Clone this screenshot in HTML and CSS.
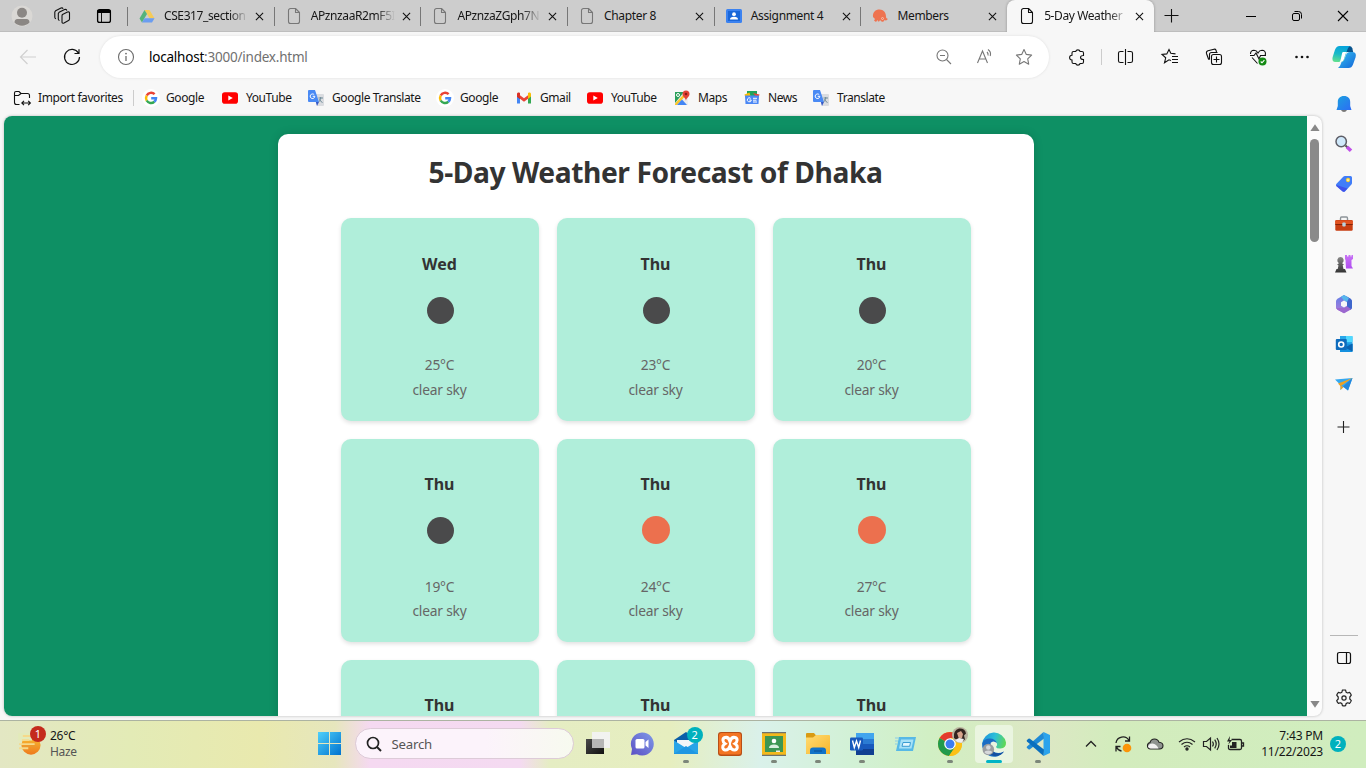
FILE: index.html
```html
<!DOCTYPE html>
<html lang="en">
<head>
<meta charset="utf-8">
<title>5-Day Weather Forecast</title>
<link rel="stylesheet" href="styles.css">
</head>
<body>
<svg class="defs" width="0" height="0">
  <defs>
    <linearGradient id="blue" x1="0" y1="0" x2="1" y2="1"><stop offset="0" stop-color="#35c1f1"/><stop offset="1" stop-color="#1466d8"/></linearGradient>
    <linearGradient id="bell" x1="0" y1="0" x2="1" y2="1"><stop offset="0" stop-color="#1ba2df"/><stop offset="1" stop-color="#2d6cf5"/></linearGradient>
    <linearGradient id="copA" x1="0.5" y1="0" x2="0.3" y2="1"><stop offset="0" stop-color="#06a3dc"/><stop offset="0.5" stop-color="#19b9c8"/><stop offset="1" stop-color="#62e08e"/></linearGradient>
    <linearGradient id="win" gradientUnits="userSpaceOnUse" x1="0" y1="0" x2="23" y2="23"><stop offset="0" stop-color="#4fd0fa"/><stop offset="1" stop-color="#0072cf"/></linearGradient>
    <linearGradient id="m365" x1="0" y1="0" x2="0" y2="1"><stop offset="0" stop-color="#5e7fe6"/><stop offset="1" stop-color="#b27bd9"/></linearGradient>
    <linearGradient id="rook" x1="0" y1="0" x2="0" y2="1"><stop offset="0" stop-color="#c873f5"/><stop offset="1" stop-color="#b04df0"/></linearGradient>
    <linearGradient id="pawn" x1="0" y1="0" x2="0" y2="1"><stop offset="0" stop-color="#888"/><stop offset="1" stop-color="#333"/></linearGradient>
    <linearGradient id="chat" x1="1" y1="0" x2="0" y2="1"><stop offset="0" stop-color="#7f9ae8"/><stop offset="1" stop-color="#5b4fc4"/></linearGradient>
    <linearGradient id="edge" x1="0" y1="0.3" x2="1" y2="0.5"><stop offset="0" stop-color="#1f93dc"/><stop offset="0.5" stop-color="#2bbfd8"/><stop offset="1" stop-color="#5fd856"/></linearGradient>
    <linearGradient id="folder" x1="0" y1="0" x2="1" y2="1"><stop offset="0" stop-color="#ffdc73"/><stop offset="1" stop-color="#f8b62b"/></linearGradient>
    <linearGradient id="darkSq" x1="0" y1="0" x2="1" y2="1"><stop offset="0" stop-color="#4a4a4a"/><stop offset="1" stop-color="#111"/></linearGradient>
    <linearGradient id="sun" x1="0" y1="0" x2="0" y2="1"><stop offset="0" stop-color="#f8c033"/><stop offset="1" stop-color="#ee7a1d"/></linearGradient>
  </defs>
  <symbol id="i-close" viewBox="0 0 10 10"><path d="M1 1l8 8M9 1l-8 8" fill="none" stroke="#111" stroke-width="1.2"/></symbol>
  <symbol id="i-file" viewBox="0 0 16 18"><path d="M4.500 1.500h5l4 4v9a2 2 0 0 1-2 2h-7a2 2 0 0 1-2-2v-11a2 2 0 0 1 2-2zM9.500 1.500v4h4" fill="none" stroke="currentColor" stroke-width="1.1" stroke-linejoin="round"/></symbol>
  <symbol id="i-g" viewBox="0 0 18 18"><circle cx="9" cy="9" r="9" fill="#fff"/><g fill="none" stroke-width="2.500"><path d="M12.600 5.200A5 5 0 0 0 4.700 6.500" stroke="#ea4335"/><path d="M4.700 6.500a5 5 0 0 0 0 5" stroke="#fbbc05"/><path d="M4.700 11.500a5 5 0 0 0 7.600 1.300" stroke="#34a853"/><path d="M12.300 12.800A5 5 0 0 0 14 9.200H9.200" stroke="#4285f4"/></g></symbol>
  <symbol id="i-yt" viewBox="0 0 16 16"><rect y="2.300" width="16" height="11.400" rx="2.800" fill="#f00"/><path d="M6.300 5.400v5.200L10.800 8z" fill="#fff"/></symbol>
  <symbol id="i-gt" viewBox="0 0 16 16"><path d="M6 4h9a1 1 0 0 1 1 1v10a1 1 0 0 1-1 1H9z" fill="#dadce0"/><path d="M7.800 12H11l-2 4z" fill="#3559c7"/><path d="M1 0h6l4 12H1a1 1 0 0 1-1-1V1a1 1 0 0 1 1-1z" fill="#4a8af4"/><path d="M6.200 4.700A2.300 2.300 0 1 0 6.800 6.300H4.700" fill="none" stroke="#fff"/><path d="M10.500 8h4.500M12.700 7v1c-.2 2-1 3.300-2 4M11.300 9.300c.7 1.500 1.700 2.500 3.200 3.200" fill="none" stroke="#6e8b98"/></symbol>
  <symbol id="i-gmail" viewBox="0 0 16 16"><path d="M1 4v9.500h3V7z" fill="#4285f4"/><path d="M12 7v6.500h3V4z" fill="#34a853"/><path d="M1 3.500l3 2.300V9L1 6.700z" fill="#c5221f"/><path d="M4 5.200L8 8.200l4-3v3.600l-4 3-4-3z" fill="#ea4335"/><path d="M1 6.700V4c0-1.700 1.700-2 2.600-1.200L4 3.100v5.700z" fill="#d93025"/><path d="M12 3.100l.5-.4C13.700 2 15 2.700 15 4v2.600l-3 2.300z" fill="#fbbc04"/></symbol>
  <symbol id="i-maps" viewBox="0 0 16 16"><path d="M1 3l13-1v13H1z" fill="#e8eaed"/><path d="M1 2h9L1 13z" fill="#2a9f5a"/><path d="M1 15V13.500L11 3l1.500 2L3 15z" fill="#fbc62b"/><path d="M3 15l5-5.500 5 5.500z" fill="#4285f4"/><path d="M9 9l3-3 2 3v5z" fill="#eceef0"/><circle cx="4" cy="5" r="1.500" fill="none" stroke="#fff"/><path d="M12 11c0-3-3.500-4-3.500-7a3.500 3.500 0 0 1 7 0c0 3-3.500 4-3.500 7z" fill="#e24335"/><circle cx="12" cy="4" r="1.300" fill="#8b1c14"/></symbol>
  <symbol id="i-news" viewBox="0 0 16 16"><path d="M3 1h10v5H3z" fill="#1fa35c"/><path d="M.5 4.500l5-2L7 8H1.500z" fill="#fbbc04"/><path d="M9 3l6.500 1.500L14 9z" fill="#ea4335"/><path d="M1 5.500h14L14.500 14H1.500z" fill="#4a87f5"/><path d="M6.700 8.400a2 2 0 1 0 .6 1.600H5.300M9 8.300h4M9 10.200h3.500M9 12h4" fill="none" stroke="#fff"/></symbol>
  <symbol id="i-dot" viewBox="0 0 6 3"><rect width="6" height="3" rx="1.500" fill="#7c867a"/></symbol>
</svg>

<div class="browser">
  <header class="tabstrip">
    <div class="strip-left">
      <svg width="44" height="32" viewBox="0 0 44 32"><circle cx="22" cy="16" r="10.500" fill="#dad8d5"/><circle cx="22" cy="12.800" r="5" fill="#8b8784"/><path d="M14.500 22.500q0-3.500 3-3.500h9q3 0 3 3.500a10.500 10.500 0 0 1-15 0z" fill="#8b8784"/></svg>
      <svg width="40" height="32" viewBox="44 0 40 32" fill="none" stroke="#111" stroke-width="1.100" stroke-linejoin="round"><path d="M62.500 14.500l5-2.500q2-.5 2 1v6q0 1-1 1.500l-4.500 2.500q-2 .7-2-1v-6q0-1 .5-1.500z"/><path d="M59.500 20.500q-1.200-.3-1.200-1.500v-5.500l.8-1.300 5.500-2.700q1.800-.5 2.200 1.200"/><path d="M56 18.800q-1.200-.3-1.200-1.500V12l.8-1.300L61 8q1.600-.4 2.100.8"/></svg>
      <svg width="43" height="32" viewBox="84 0 43 32"><rect x="97.600" y="9.600" width="12.800" height="12.800" rx="2" fill="none" stroke="#000" stroke-width="1.300"/><path d="M97.500 10h13v3h-13z" fill="#000"/><path d="M101.500 13v9" stroke="#000" stroke-width=".9"/></svg>
    </div>
    <div class="tab"><svg class="fav" viewBox="0 0 16 16"><path d="M5.500 2h5l5 8.300h-5z" fill="#f6cb58"/><path d="M5.500 2L.5 10.500 3 14.500 8 6z" fill="#55b37b"/><path d="M5.600 10.300h9.900L13 14.500H3z" fill="#6b9df0"/></svg><span class="tab-title fade">CSE317_section</span><svg class="x"><use href="#i-close"/></svg></div>
    <div class="tab"><svg class="fav file"><use href="#i-file"/></svg><span class="tab-title fade">APznzaaR2mF5I</span><svg class="x"><use href="#i-close"/></svg></div>
    <div class="tab"><svg class="fav file"><use href="#i-file"/></svg><span class="tab-title fade">APznzaZGph7N</span><svg class="x"><use href="#i-close"/></svg></div>
    <div class="tab"><svg class="fav file"><use href="#i-file"/></svg><span class="tab-title">Chapter 8</span><svg class="x"><use href="#i-close"/></svg></div>
    <div class="tab"><svg class="fav" viewBox="0 0 16 16"><rect y="1" width="16" height="14" rx="1.500" fill="#3b82f0"/><rect x="2" y="3" width="12" height="10" fill="#1a67d9"/><circle cx="8" cy="6.200" r="1.900" fill="#fff"/><path d="M4 11.500q0-2.700 4-2.700t4 2.700z" fill="#fff"/></svg><span class="tab-title">Assignment 4</span><svg class="x"><use href="#i-close"/></svg></div>
    <div class="tab"><svg class="fav" viewBox="0 0 16 16"><path d="M1 9C.5 4 3.500 1.500 7.500 1.500c4 0 6.500 3 6.500 7 0 1.500.5 2 1.500 2v1q-1.500 1.500-3 .5-.5 2.500-3 1.500L8 12q-.5 2-2 1.500l-.5-1.500-1.500 2-2-1.500L3 11z" fill="#ee7350"/><circle cx="10.500" cy="10.500" r="1" fill="none" stroke="#fbd5c7" stroke-width=".7"/></svg><span class="tab-title">Members</span><svg class="x"><use href="#i-close"/></svg></div>
    <div class="tab active"><svg class="fav file"><use href="#i-file"/></svg><span class="tab-title fade">5-Day Weather</span><svg class="x"><use href="#i-close"/></svg></div>
    <svg class="new-tab" viewBox="0 0 16 16"><path d="M7.500 1v13.500M.5 7.500h14" stroke="#111" stroke-width="1.100"/></svg>
    <div class="window-controls">
      <svg viewBox="0 0 12 12"><path d="M1 6.500h10" stroke="#000"/></svg>
      <svg viewBox="0 0 12 12" fill="none" stroke="#000"><rect x="1.500" y="3.500" width="7" height="7" rx="1.500"/><path d="M3.500 1.500h4q3 0 3 3v4"/></svg>
      <svg viewBox="0 0 12 12"><path d="M1 1l10 10M11 1L1 11" stroke="#000" stroke-width="1.100"/></svg>
    </div>
  </header>

  <div class="toolbar">
    <svg class="back" viewBox="0 0 18 18"><path d="M17 9H1.500M8.500 2L1.500 9l7 7" fill="none" stroke="#d0d0d0" stroke-width="1.200"/></svg>
    <svg class="reload" viewBox="0 0 18 18"><path d="M15.500 5.200A7.500 7.500 0 1 0 16.500 9M16 1.200v4.300h-4.500" fill="none" stroke="#111" stroke-width="1.200"/></svg>
    <div class="address">
      <svg class="info" viewBox="0 0 18 18"><circle cx="9" cy="9" r="7.500" fill="none" stroke="#6c6c6c" stroke-width="1.100"/><path d="M9 8v5" stroke="#6c6c6c" stroke-width="1.300"/><circle cx="9" cy="5.600" r=".9" fill="#6c6c6c"/></svg>
      <span class="url"><b>localhost</b>:3000/index.html</span>
      <span class="address-icons">
        <svg viewBox="0 0 18 18"><g fill="none" stroke="#777" stroke-width="1.100"><circle cx="7.500" cy="7.500" r="5.500"/><path d="M11.500 11.500l4.500 4.500M5 7.500h5"/></g></svg>
        <svg viewBox="0 0 18 18"><g fill="none" stroke="#777" stroke-width="1.100"><path d="M2.500 15L7.500 3l5 12M4.200 11h6.500M12 4q1.500 1.500 1 3.500M13 1.500q3.500 2.300 2.200 6.500"/></g></svg>
        <svg viewBox="0 0 18 18"><path d="M9 1.500l2.300 4.900 5.300.7-3.900 3.700 1 5.400L9 13.600l-4.700 2.600 1-5.400L1.400 7.100l5.300-.7z" fill="none" stroke="#777" stroke-width="1.100" stroke-linejoin="round"/></svg>
      </span>
    </div>
    <div class="actions">
      <svg viewBox="0 0 18 18"><path d="M5.500 3.500h2.200a2.300 2.300 0 0 1 4.400 0H14q1.500 0 1.500 1.500v2.500q-3 0-3 2t3 2V14q0 1.500-1.500 1.500h-1.900a2.300 2.300 0 0 1-4.400 0H5.500Q4 15.500 4 14v-2a2.300 2.300 0 0 1 0-4.800V5q0-1.500 1.500-1.500z"/></svg>
      <i class="divider"></i>
      <svg viewBox="0 0 18 18"><path d="M8.500 1v16M6.500 3.500h-3Q1.500 3.500 1.500 5v8q0 1.500 2 1.500h3M10.500 3.500h3q2 0 2 1.500v8q0 1.500-2 1.500h-3"/></svg>
      <svg viewBox="0 0 18 18"><path d="M10 12.500L8 11.800l-4.500 3 1.200-5L1 6.400l4.800-.5L8 1.500l1.800 3.800 4.700.6M11 8.500h6M11 11.500h6M11 14.500h6"/></svg>
      <svg viewBox="0 0 18 18"><rect x="6.500" y="6.500" width="10" height="10" rx="2"/><path d="M11.500 8.500v6M8.500 11.500h6M4.500 11.500L3.500 11 1.500 5.500q-.5-2 1.500-2.700l6-1.600q1.500-.3 2 1l.5 1.800M4.500 11.500v-5q0-2 2-2h6"/></svg>
      <svg viewBox="0 0 18 18"><path d="M1.500 6Q1.500 2.500 5 2.300q2.500 0 4 2.700 1.500-2.700 4-2.700 3.500.2 3.500 3.700l-.5 1.500M3 9.500l5.500 6M1 7.500h4l2-2.500 3 6 1.500-3.500h5.500"/><circle cx="13.500" cy="13.500" r="4" fill="#138a13" stroke="none"/><path d="M11.700 13.500l1.300 1.300 2.400-2.700" stroke="#fff"/></svg>
      <svg viewBox="0 0 18 18"><g fill="#111" stroke="none"><circle cx="3.500" cy="9" r="1.300"/><circle cx="9" cy="9" r="1.300"/><circle cx="14.500" cy="9" r="1.300"/></g></svg>
    </div>
    <svg class="copilot" viewBox="0 0 24 24"><path d="M14.500 1h3.200q2 .2 2.600 2.300L21.200 7H14z" fill="#07548e"/><path d="M7.500 1H18q-2 1-3 4.500L12.500 14q-.8 3-3.700 3H3.500Q-.5 17 .6 12.300L3 4.800Q4.300 1 7.500 1z" fill="url(#copA)"/><path d="M16.500 23H6q2-1 3-4.500l.5-1.500q2.300-.5 3-3L14 10q1-3 4-3h2.800q4 .5 2.800 5.200L21 19.500Q19.700 23 16.500 23z" fill="url(#blue)"/><path d="M10.800 7h4q-1 .8-1.600 3L12 14q-.6 2.500-3 3H7.500q.8-.7 1.300-3l1-4.500Q10 7.500 10.800 7z" fill="#fff"/></svg>
  </div>

  <div class="workspace">
    <div class="column">
      <nav class="favorites">
        <a class="import"><svg viewBox="0 0 18 18"><path d="M6.500 15.500h-3q-2 0-2-2V4q0-1.500 1.500-1.500h3L8 4.500h6.500q2 0 2 2V9M1.500 6.500h4l2.500-2M9.500 14h7M11 11.800L8.800 14l2.200 2.200M15.200 11.800l2.200 2.200-2.200 2.200" fill="none" stroke="#111" stroke-width="1.100"/></svg><span>Import favorites</span></a>
        <a class="f1"><svg class="round"><use href="#i-g"/></svg><span>Google</span></a>
        <a class="f2"><svg><use href="#i-yt"/></svg><span>YouTube</span></a>
        <a class="f3"><svg><use href="#i-gt"/></svg><span>Google Translate</span></a>
        <a class="f4"><svg class="round"><use href="#i-g"/></svg><span>Google</span></a>
        <a class="f5"><svg><use href="#i-gmail"/></svg><span>Gmail</span></a>
        <a class="f6"><svg><use href="#i-yt"/></svg><span>YouTube</span></a>
        <a class="f7"><svg><use href="#i-maps"/></svg><span>Maps</span></a>
        <a class="f8"><svg><use href="#i-news"/></svg><span>News</span></a>
        <a class="f9"><svg><use href="#i-gt"/></svg><span>Translate</span></a>
      </nav>
      <div class="viewport">
        <main class="page">
          <section class="forecast">
            <h1><span>5-Day Weather Forecast of Dhaka</span></h1>
            <div class="cards">
              <article class="card"><h2>Wed</h2><i class="orb night"></i><p>25°C</p><p>clear sky</p></article>
              <article class="card"><h2>Thu</h2><i class="orb night"></i><p>23°C</p><p>clear sky</p></article>
              <article class="card"><h2>Thu</h2><i class="orb night"></i><p>20°C</p><p>clear sky</p></article>
              <article class="card lower"><h2>Thu</h2><i class="orb night"></i><p>19°C</p><p>clear sky</p></article>
              <article class="card lower"><h2>Thu</h2><i class="orb day"></i><p>24°C</p><p>clear sky</p></article>
              <article class="card lower"><h2>Thu</h2><i class="orb day"></i><p>27°C</p><p>clear sky</p></article>
              <article class="card lower"><h2>Thu</h2></article>
              <article class="card lower"><h2>Thu</h2></article>
              <article class="card lower"><h2>Thu</h2></article>
            </div>
          </section>
        </main>
        <div class="scrollbar">
          <svg viewBox="0 0 10 7"><path d="M5 .3L9.600 7H.4z" fill="#888"/></svg>
          <i class="thumb"></i>
          <svg class="down" viewBox="0 0 10 7"><path d="M5 6.700L9.600 0H.4z" fill="#888"/></svg>
        </div>
      </div>
    </div>
    <aside class="sidebar">
      <svg viewBox="0 0 18 18"><path d="M6 15h6q-1 2-3 2t-3-2z" fill="#777"/><path d="M9 1c4 0 6.200 2.500 6.200 6V11l1.300 4H1.500l1.300-4V7C2.800 3.500 5 1 9 1z" fill="url(#bell)"/></svg>
      <svg viewBox="0 0 18 18"><path d="M10.500 10.500l2 2" stroke="#555" stroke-width="2"/><path d="M12 12l4 3.700" stroke="#c150e8" stroke-width="3.600"/><circle cx="6.200" cy="6.500" r="5.200" fill="#cfe8fa" stroke="#5d5d66" stroke-width="1.500"/></svg>
      <svg viewBox="0 0 18 18"><path d="M10 1h5.500Q17 1 17 2.500V8q0 1-.8 1.800l-6 6.500q-1 1-2.200 0L1.500 11q-1-1-.2-2L8 2q.9-1 2-1z" fill="#417df8"/><path d="M1.500 10L12.500 13.500l-3 3q-1 .5-2 0L1.200 11z" fill="#3f52ea"/><circle cx="13" cy="5" r="1.500" fill="#fff" stroke="#f4cf35" stroke-width="1.300"/></svg>
      <svg viewBox="0 0 18 18"><path d="M5.500 5V3.500q0-1.500 1-1.500h5q1 0 1 1.500V5" fill="none" stroke="#8d9499" stroke-width="1.400"/><rect x=".3" y="5" width="17.400" height="10.700" rx="1.200" fill="#c83e12"/><path d="M.3 5.500h17.400V9H.3z" fill="#e15220"/><path d="M.3 9h17.400v1H.3z" fill="#872407"/><rect x="7.300" y="7.500" width="3.400" height="4" rx="1" fill="#b9d2dd"/></svg>
      <svg viewBox="0 0 18 18"><path d="M10 0h2v1.500h1.500V0h2v1.500H16.500V0H18v4l-1.500 1V11l1.500 2.500h-7L10.500 5 10 4z" fill="url(#rook)"/><path d="M5.500 2a3.200 3.200 0 0 1 2 5.700v1.300h1.500L7.700 10.500 8.500 14H10l1.500 3.500H0L1.500 14H2.700l.8-3.500L2 9h1.500V7.700a3.200 3.200 0 0 1 2-5.700z" fill="url(#pawn)"/></svg>
      <svg viewBox="0 0 18 18"><path d="M9 0l6.500 3.700q1.500 1 1.500 2.500v6q0 1.500-1.500 2.500L9 18.200 2.500 14.700Q1 13.700 1 12.200v-6q0-1.500 1.500-2.500z" fill="url(#m365)"/><path d="M11.500 1.300l4 2.400Q17 4.700 17 6.200v6q0 1.500-1.500 2.500L12 11.500V7z" fill="#3e67cc"/><path d="M6 1.700L9 0l5 2.900L12 7 9 5.500z" fill="#57b7ed"/><path d="M1.200 13L9 13l3-1.500 4 2.500L9 18.200 2.500 14.700z" fill="#9c68cf"/><path d="M9 5.500l3 1.700v3.600l-3 1.700-3-1.700V7.200z" fill="#f7f7f7"/></svg>
      <svg viewBox="0 0 18 18"><path d="M5 1h11.500Q17.500 1 17.500 2v14q0 1-1 1H5z" fill="#28a8ea"/><path d="M11 1h6.500v6H11z" fill="#50d9ff"/><path d="M6 8l11.500 1v7q0 1-1 1H5z" fill="#1490df"/><path d="M10 12.500l7.500-4v8z" fill="#0b63b1"/><rect x=".8" y="4" width="11" height="11" rx="1" fill="#0f6cbd"/><circle cx="6.200" cy="9.500" r="2.500" fill="none" stroke="#fff" stroke-width="1.600"/></svg>
      <svg viewBox="0 0 18 18"><path d="M0 4.500L17.500 3 13 15.500 8.500 12l-3 3V10z" fill="#35a8f0"/><path d="M17.500 3L3 8.500l2.500 2.700zM5.500 10.800V15l3-3z" fill="#efa224"/><path d="M8 11.500L17.500 3 13 15.500z" fill="#2386dd"/></svg>
      <svg class="add" viewBox="0 0 18 18"><path d="M8.500 3v12M2.500 9h12" stroke="#222" stroke-width="1.100"/></svg>
      <i class="side-rule"></i>
      <svg class="panel" viewBox="0 0 18 18"><path d="M4.500 3.500h9q2 0 2 2v7q0 2-2 2h-9q-2 0-2-2v-7q0-2 2-2zM11.500 3.500v11" fill="none" stroke="#111" stroke-width="1.200"/></svg>
      <svg class="gear" viewBox="0 0 18 18"><path d="M7.400 1.200q1.600-.4 3.200 0l.5 2 1.500.8 2-.6q1.200 1.200 1.700 2.800L14.800 8v2l1.500 1.600q-.6 1.600-1.700 2.800l-2-.6-1.500.8-.5 2q-1.600.4-3.200 0l-.5-2-1.500-.8-2 .6q-1.200-1.200-1.700-2.800L3.200 10V8L1.700 6.200q.5-1.600 1.700-2.800l2 .6 1.500-.8z" fill="none" stroke="#222" stroke-width="1.200" stroke-linejoin="round"/><circle cx="9" cy="9" r="2.100" fill="none" stroke="#222" stroke-width="1.200"/></svg>
    </aside>
  </div>
</div>

<footer class="taskbar">
  <div class="weather">
    <div class="weather-icon">
      <svg viewBox="0 0 26 22"><circle cx="13" cy="10" r="10.500" fill="url(#sun)"/><path d="M-1 -3h15v8H-1z" fill="#e3eab9"/><path d="M4 0h9M3 4.500h8M0 9h17M0 13.500h10" stroke="#f6d98a" stroke-width="2"/><path d="M3 11.300h16" stroke="#e89a35"/></svg>
      <b class="alert">1</b>
    </div>
    <div class="weather-text"><span>26°C</span><small>Haze</small></div>
  </div>
  <svg class="start" viewBox="0 0 23 23"><path d="M0 0h11v11H0zM12 0h11v11H12zM0 12h11v11H0zM12 12h11v11H12z" fill="url(#win)"/></svg>
  <div class="search"><svg viewBox="0 0 16 16"><circle cx="7" cy="7" r="5.500" fill="none" stroke="#222" stroke-width="1.700"/><path d="M11 11l4 4" stroke="#222" stroke-width="1.900"/></svg><span>Search</span></div>
  <div class="apps">
    <div class="app"><svg viewBox="0 0 24 24"><path d="M0 7h18v15H0z" fill="url(#darkSq)"/><path d="M6 0h18v16H6z" fill="#f2f2f2" opacity=".95"/><path d="M6 7h12v9H6z" fill="#b6b6b6"/></svg></div>
    <div class="app"><svg viewBox="0 0 24 24"><path d="M12 .5a11.500 11.500 0 1 1-5 21.700L1 23l1-6A11.500 11.500 0 0 1 12 .5z" fill="url(#chat)"/><rect x="5.500" y="7" width="9" height="9.500" rx="1.500" fill="#fff"/><path d="M15.500 10l3-2.500v8.500l-3-2.500z" fill="#fff"/></svg></div>
    <div class="app"><svg viewBox="0 0 24 24"><path d="M0 8l12-8 12 8v14H0z" fill="#0a5ea8"/><path d="M3 8h18v9H3z" fill="#f3f6f8"/><path d="M0 8.500l12 7.500 12-7.500v12.500q0 1-1 1H1q-1 0-1-1z" fill="#28a4e8"/><path d="M0 22l12-8 12 8z" fill="#1f97e2"/></svg><b class="count">2</b><svg class="run"><use href="#i-dot"/></svg></div>
    <div class="app"><svg viewBox="0 0 24 24"><rect width="24" height="24" rx="3" fill="#b84f16"/><rect x="1" y="1" width="22" height="21.500" rx="2.500" fill="#f37523"/><path d="M12 9.500C11 6 9 5 7 5.500 4 6.200 4.500 10 7 11.700 4 13.500 4 17.500 7 18c2.500.3 4-1 5-4 1 3 2.500 4.300 5 4 3-.5 3-4.500 0-6.300 2.500-1.700 3-5.500 0-6.200-2-.5-4 .5-5 4z" fill="none" stroke="#fff" stroke-width="3"/></svg></div>
    <div class="app"><svg viewBox="0 0 24 24"><path d="M0 0h24v24H0z" fill="#f4b91b"/><path d="M0 0h24v1.300H0zM0 22.700h24V24H0z" fill="#6c716e"/><path d="M3 4h18v16H3z" fill="#3d9653"/><circle cx="12" cy="9" r="2.300" fill="#fff"/><path d="M7 16q0-3.500 5-3.500t5 3.500z" fill="#d9eedf"/><path d="M14 18.500h4V20h-4z" fill="#eee"/></svg><svg class="run"><use href="#i-dot"/></svg></div>
    <div class="app"><svg viewBox="0 0 24 24"><path d="M1 1h7l2.500 3H23q1 0 1 1v17H1q-1 0-1-1V2q0-1 1-1z" fill="#d99b13"/><path d="M10 3h13q1 0 1 1v17q0 1-1 1H1q-1 0-1-1V5.500h7z" fill="url(#folder)"/><path d="M4 22v-3.500Q4 15.500 7 15.500h10q3 0 3 3V22z" fill="#1173c8"/><path d="M8 19h8" stroke="#0b4d92"/></svg><svg class="run"><use href="#i-dot"/></svg></div>
    <div class="app"><svg viewBox="0 0 24 24"><rect x="6" y="1" width="18" height="22" rx="1.500" fill="#2b7cd3"/><path d="M6 1h18v6H6z" fill="#41a5ee"/><path d="M6 12h18v5H6z" fill="#185abd"/><path d="M6 17h18v6H6z" fill="#103f91"/><rect y="5.500" width="13" height="13" rx="1.200" fill="#185abd"/><path d="M2.500 8.500l1.800 7 2.200-6.500 2.200 6.500 1.800-7" fill="none" stroke="#fff" stroke-width="1.400"/></svg><svg class="run"><use href="#i-dot"/></svg></div>
    <div class="app"><svg viewBox="0 0 24 24"><path d="M5 5h17l-3 14H2z" fill="#57b9e6"/><path d="M7 7.500h12.500l-2 9H5z" fill="#a7e1f7"/><path d="M9 10.500h7.500l-.8 3.800H8z" fill="#e3f7fe" stroke="#3b9dd2"/><path d="M1 6h4M1 9h3M1 12h2" stroke="#8acbe6"/></svg></div>
    <div class="app"><svg viewBox="0 0 24 24"><circle cx="12" cy="12" r="12" fill="#fbc116"/><path d="M12 12L1.600 6A12 12 0 0 1 22.400 6H12z" fill="#e33b2e"/><path d="M1.600 6A12 12 0 0 0 11 24l6-9-5-3z" fill="#219a4c"/><path d="M12 6.500h10.500L17.500 15 11 24a12 12 0 0 0 11.500-17.500z" fill="#fbc116"/><circle cx="12" cy="12" r="5.800" fill="#fff"/><circle cx="12" cy="12" r="4.500" fill="#3c7df0"/></svg><svg class="avatar" viewBox="0 0 16 16"><circle cx="8" cy="8" r="8" fill="#b9b39e"/><path d="M2 11Q1 3 7 1.500q6-.5 7 5l-2 2 1 4-5 3z" fill="#33241f"/><path d="M5 6l4-2 2 3-1 4-3 1z" fill="#d8a48c"/><path d="M3 13l4-2 5 1-2 3.500q-4 1-7-2.500z" fill="#eee"/></svg><svg class="run"><use href="#i-dot"/></svg></div>
    <div class="app current"><svg viewBox="0 0 24 24"><path d="M.2 12A12 12 0 0 1 24 10.500q.3 5.500-5.500 6-4 .2-4.500-1.500 2-1.500.8-4Q13 7.500 9 7.500 3 8 .2 12z" fill="url(#edge)"/><path d="M.1 11.500Q2 6.500 8 6.500q5 .2 7 4.500-4-3-6.500 0-2 4 1.500 7.500 5 4.500 12 1A12 12 0 0 1 .1 11.500z" fill="#1a6dc4"/><path d="M9 11q-2 5 2 8.500 5 4 11 0-3.500 5-10 4.500-6-1.500-6-7 0-4 3-6z" fill="#1450a0"/><circle cx="6.300" cy="17.500" r="5.800" fill="#9a9da0"/><circle cx="6.300" cy="15.500" r="2.300" fill="#d6d8da"/><path d="M2.500 20.500q0-2 3.800-2t3.800 2a5 5 0 0 1-7.600 0z" fill="#d6d8da"/></svg><i class="current-bar"></i></div>
    <div class="app"><svg viewBox="0 0 24 24"><path d="M17.500 0L24 3v18l-6.500 3z" fill="#2ba3ec"/><path d="M17.500 0L1 14.500q-.7.800 0 1.500l1.500 1.300q.7.500 1.400 0L18 6.500z" fill="#1f8ad6"/><path d="M17.500 24L1 9.500q-.7-.8 0-1.500l1.500-1.300q.7-.5 1.400 0L18 17.500z" fill="#0b6fbd"/></svg><svg class="run"><use href="#i-dot"/></svg></div>
  </div>
  <div class="tray">
    <svg class="chev" viewBox="0 0 12 12"><path d="M1 8.500l5-5 5 5" fill="none" stroke="#222" stroke-width="1.300"/></svg>
    <svg viewBox="0 0 18 18"><path d="M2 8a7 7 0 0 1 13-2.500M15.500 1.500V6H11M2 16.500V11.500h4.500M2.500 12q1.500 3.500 5 4" fill="none" stroke="#222" stroke-width="1.300"/><circle cx="13" cy="13" r="4.300" fill="#fb9509"/></svg>
    <svg viewBox="0 0 18 18"><path d="M4.500 14a3.300 3.300 0 0 1-.5-6.500Q5 4 8.500 4q3.300 0 4.500 3.200 4 .3 4 3.500-.2 3.300-3.500 3.300z" fill="#8f9490" stroke="#222" stroke-width="1.100"/><path d="M2 11.500q1-3 4.500-3 4 .5 6 5h-8Q2.500 13.500 2 11.500z" fill="#f2f2f2"/></svg>
    <div class="status">
      <svg viewBox="0 0 18 18"><g fill="none" stroke="#222" stroke-width="1.200"><path d="M1 7q8-6.500 16 0M3.500 9.500q5.500-4.500 11 0M6 12q3-2.500 6 0"/><circle cx="9" cy="14" r="1.100" fill="#222"/></g></svg>
      <svg viewBox="0 0 18 18"><g fill="none" stroke="#222" stroke-width="1.200"><path d="M1.500 6.500h3l4-3.500v12l-4-3.500h-3zM10.500 6.500q1.700 2.500 0 5M12.700 4.700q3 4.300 0 8.600M15 3q4 6 0 12"/></g></svg>
      <svg viewBox="0 0 18 18"><path d="M5.500 4.500H14q1.500 0 1.500 1.500v7q0 1.500-1.500 1.500H4q-1.500 0-1.500-1.500V10M16 8h1.500v3H16" fill="none" stroke="#222" stroke-width="1.300"/><path d="M6 7h4.500v6H4v-2.500h2z" fill="#222"/><path d="M4 1L1 6.500h2.500L2 10l4-5H3.500z" fill="#222"/></svg>
    </div>
    <div class="clock"><span>7:43 PM</span><span>11/22/2023</span></div>
    <b class="notif">2</b>
  </div>
</footer>
</body>
</html>
```
FILE: styles.css
```css
* { box-sizing: border-box; }
body { margin: 0; width: 1366px; height: 768px; overflow: hidden; background: #f7f7f7; color: #161616; font-family: "Noto Sans", "Open Sans", sans-serif; font-size: 12px; letter-spacing: -0.3px; }
.defs { position: absolute; }
svg { display: block; flex: none; overflow: visible; }
.browser { height: 720px; display: flex; flex-direction: column; }

/* Tab strip */
.tabstrip { height: 32px; flex: none; display: flex; background: #cdcdcd; box-shadow: inset 0 -1px #bebebe; }
.strip-left { display: flex; width: 127px; }
.tab { width: 146.7px; height: 32px; display: flex; align-items: center; padding-left: 11px; border-left: 1px solid transparent; background: linear-gradient(#777, #777) 0 7px / 1px 19px no-repeat; background-origin: border-box; }
.tab.active { background: #f7f7f7; border-radius: 8px 8px 0 0; box-shadow: 0 0 3px rgba(0, 0, 0, .3); clip-path: inset(0 -3px 0 -3px); }
.fav { width: 16px; height: 16px; margin-right: 8px; }
.fav.file { height: 18px; color: #777; }
.active .fav.file { color: #111; }
.tab-title { width: 85px; overflow: hidden; white-space: nowrap; line-height: 18px; letter-spacing: -0.35px; padding-left: 1px; }
.fade { letter-spacing: -0.4px; -webkit-mask-image: linear-gradient(90deg, #000 78%, transparent); mask-image: linear-gradient(90deg, #000 78%, transparent); }
.x { width: 9px; height: 9px; margin-left: 7px; }
.new-tab { width: 16px; height: 16px; margin: 8px 0 0 10px; }
.window-controls { margin-left: auto; display: flex; align-items: center; gap: 34px; padding-right: 17px; }
.window-controls svg { width: 12px; height: 12px; }

/* Toolbar */
.toolbar { height: 50px; flex: none; display: flex; align-items: center; padding-left: 19px; }
.back, .reload { width: 18px; height: 18px; }
.reload { margin: 0 19px 0 26px; }
.address { width: 949px; height: 42px; border-radius: 21px; background: #fff; box-shadow: 0 0 3px rgba(0, 0, 0, .1); display: flex; align-items: center; padding: 0 16px 0 17px; }
.info { width: 18px; height: 18px; margin-right: 14px; }
.url { font-size: 13.5px; letter-spacing: -0.22px; color: #707070; }
.url b { font-weight: 400; color: #000; }
.address-icons { margin-left: auto; display: flex; gap: 22px; }
.address-icons svg { width: 18px; height: 18px; }
.actions { display: flex; align-items: center; padding-left: 19px; gap: 26px; }
.actions svg { width: 18px; height: 18px; fill: none; stroke: #111; stroke-width: 1.1; }
.divider { width: 1px; height: 16px; background: #ccc; margin: 0 -11px; }
.copilot { width: 24px; height: 24px; margin-left: 21px; }

/* Favourites */
.workspace { flex: 1; display: flex; min-height: 0; }
.column { width: 1322px; display: flex; flex-direction: column; }
.favorites { height: 34px; flex: none; display: flex; padding-left: 13px; letter-spacing: -0.42px; }
.favorites a { display: flex; height: 32px; align-items: center; gap: 8px; white-space: nowrap; }
.favorites span { margin-top: -1px; }
.favorites svg { width: 16px; height: 16px; }
.favorites .round { width: 18px; height: 18px; margin-right: -2px; }
.favorites .import { width: 129px; background: linear-gradient(#ccc, #ccc) 120px 50% / 1px 16px no-repeat; gap: 7px; }
.favorites .import svg { width: 18px; height: 18px; }
.f1 { width: 80px; } .f2 { width: 86px; } .f3 { width: 128px; } .f4 { width: 80px; } .f5 { width: 71px; }
.f6 { width: 87px; } .f7 { width: 70px; } .f8 { width: 69px; }

/* Web page viewport */
.viewport { height: 600px; margin-left: 4px; display: flex; border-radius: 8px; overflow: hidden; background: #fcfcfc; box-shadow: 0 0 3px rgba(0, 0, 0, .25); }
.page { width: 1303px; height: 600px; overflow: hidden; background: #0e9064; padding-top: 18px; }
.forecast { width: 756px; height: 900px; margin: 0 auto; background: #fff; border-radius: 10px; box-shadow: 0 0 10px rgba(0, 0, 0, .15); padding: 18px 63px; }
h1 { margin: 0; height: 66px; line-height: 40px; font-size: 28.2px; letter-spacing: -0.42px; color: #333; text-align: center; white-space: nowrap; }
.cards { display: grid; grid-template-columns: repeat(3, 198px); grid-auto-rows: 203px; gap: 18px; }
.card { background: #b0eeda; border-radius: 10px; box-shadow: 0 2px 4px rgba(0, 0, 0, .12); display: flex; flex-direction: column; align-items: center; padding-top: 34px; }
h2 { margin: 0 0 21px; font-size: 16px; line-height: 24px; letter-spacing: 0; color: #333; }
.orb { width: 27px; height: 27px; border-radius: 50%; background: #4a4a4b; margin: 0 0 30px 2px; }
.orb.day { width: 28px; height: 28px; background: #ec704e; margin-left: 0; margin-top: -1px; }
.card p { margin: 0 0 3px; font-size: 13.8px; line-height: 22px; letter-spacing: -0.2px; color: #666; }
.card.lower { padding-top: 33px; }
.lower .orb { margin-bottom: 32px; }
.lower p { margin-bottom: 2px; }
.scrollbar { width: 15px; display: flex; flex-direction: column; align-items: center; padding: 8px 0; }
.scrollbar svg { width: 10px; height: 7px; }
.thumb { width: 9px; height: 103px; margin-top: 8px; background: #8a8a8a; border-radius: 5px; }
.scrollbar .down { margin-top: auto; }

/* Edge sidebar */
.sidebar { width: 44px; display: flex; flex-direction: column; align-items: center; gap: 22px; padding: 13px 0; }
.sidebar svg { width: 18px; height: 18px; }
.sidebar .add { margin-top: 3px; }
.side-rule { width: 28px; height: 1px; background: #b7b7b7; margin-top: auto; margin-bottom: -9px; }

/* Taskbar */
.taskbar { height: 48px; position: relative; display: flex; align-items: center; padding-bottom: 2px; border-top: 1px solid #acb3a2; background: linear-gradient(90deg, #e3e7c3 0, #e3ebb6 130px, #e9e9ae 260px, #e6e6bd 335px, #f5d9f1 370px, #f4daf1 520px, #e5edc3 550px, #e6eebf 670px, #daf1ea 760px, #d2f1d6 850px, #d1efc4 930px, #d7ebc2 990px, #dde7c5 1040px, #d3ecbd 1110px, #d0edbe 1366px); }
.weather { width: 318px; display: flex; padding-left: 19px; }
.weather-icon { width: 31px; position: relative; padding-top: 8px; }
.weather-icon svg { width: 24px; height: 20px; }
.alert, .count, .notif { display: grid; place-items: center; width: 16px; height: 16px; border-radius: 50%; color: #fff; font-weight: 400; font-size: 11px; letter-spacing: 0; line-height: 16px; }
.alert { position: absolute; left: 11px; top: -2px; background: #c42b1c; }
.weather-text { display: flex; flex-direction: column; line-height: 16px; }
.weather-text small { font-size: 12px; color: #555; letter-spacing: -0.3px; }
.start { width: 23px; height: 23px; }
.search { width: 219px; height: 31px; margin-left: 13.5px; border: 1px solid #ddcbd8; border-radius: 16px; background: linear-gradient(90deg, #fcf3fb 60%, #f7faef); display: flex; align-items: center; gap: 10px; padding-left: 10px; color: #555; font-size: 13.2px; letter-spacing: -0.2px; }
.search svg { width: 16px; height: 16px; }
.apps { display: flex; margin-left: 2px; }
.app { width: 44.1px; height: 46px; position: relative; display: grid; place-items: center; }
.app > svg { width: 24px; height: 24px; }
.app > .run { position: absolute; left: 19px; top: 39px; width: 6px; height: 3px; }
.count { position: absolute; left: 23px; top: 6px; background: #00b1bd; }
.app > .avatar { position: absolute; left: 24px; top: 6px; width: 16px; height: 16px; }
.current::before { content: ""; position: absolute; left: 3px; top: 4px; width: 38px; height: 38px; border-radius: 4px; background: #eaf5e0; }
.current > svg { position: relative; }
.current-bar { position: absolute; left: 14px; top: 39px; width: 16px; height: 3px; border-radius: 2px; background: #00b4c5; }
.tray { position: absolute; right: 20px; top: 7px; display: flex; align-items: center; }
.tray svg { width: 18px; height: 18px; }
.tray .chev { width: 12px; height: 12px; margin-right: 17px; }
.tray > svg + svg { margin-right: 14px; }
.status { display: flex; gap: 6px; margin-right: 8px; }
.clock { width: 71px; display: flex; flex-direction: column; align-items: flex-end; line-height: 16px; letter-spacing: -0.2px; }
.notif { margin-left: 7px; background: #00b1bd; }
```
